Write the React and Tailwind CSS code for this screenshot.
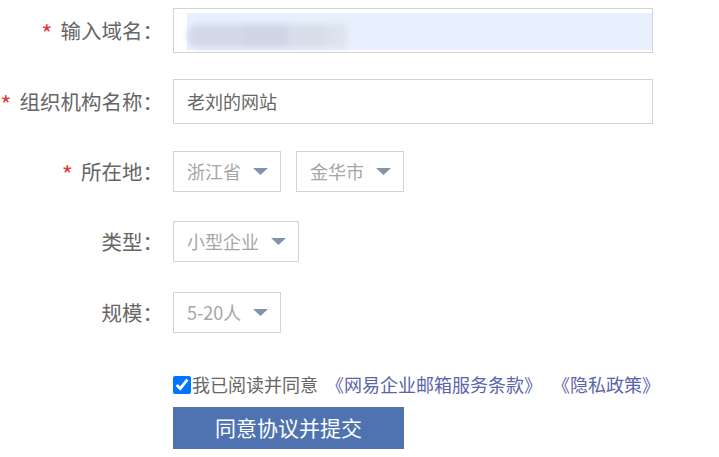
import React from 'react';

const FONT = "font-['Noto_Sans_CJK_SC','Noto_Sans',sans-serif]";

function Caret() {
  return (
    <svg width="15" height="7" viewBox="0 0 15 7" className="shrink-0">
      <path d="M0 0 H15 L7.5 7 Z" fill="#8392ab" />
    </svg>
  );
}

function Label({ required, children }) {
  return (
    <div className="w-[163px] shrink-0 text-right text-[20.5px] text-[#666] whitespace-nowrap">
      {required && (
        <span className="inline-block text-[#e4393c] text-[24px] leading-none mr-[8px] translate-y-[4px]">*</span>
      )}
      {children}：
    </div>
  );
}

function Select({ value, width }) {
  return (
    <div
      className={`${width} h-[41px] border border-[#d3d3d3] flex items-center justify-between pl-[13px] pr-[12px] text-[18px] text-[#a6a6a6]`}
    >
      <span>{value}</span>
      <Caret />
    </div>
  );
}

export default function App() {
  return (
    <div className={`${FONT} w-[719px] h-[457px] bg-white relative overflow-hidden`}>
      <div className="flex flex-col pt-[8px]">
        <div className="flex items-center">
          <Label required>输入域名</Label>
          <div className="ml-[10px] w-[480px] h-[45px] border border-[#d3d3d3] pl-[13px] pt-[4px] pb-[2px] overflow-hidden">
            <div className="h-full bg-[#e8f0fe] flex items-center">
              <div className="flex h-[24px] mt-[8px] blur-[3px]">
                <div className="w-[60px] bg-[#d3d8e6] rounded-l-full" />
                <div className="w-[40px] bg-[#cfd5e3]" />
                <div className="w-[40px] bg-[#d8dde9]" />
                <div className="w-[20px] bg-[#dde2ee]" />
              </div>
            </div>
          </div>
        </div>

        <div className="flex items-center mt-[26px]">
          <Label required>组织机构名称</Label>
          <div className="ml-[10px] w-[480px] h-[45px] border border-[#d3d3d3] px-[13px] flex items-center text-[18px] text-[#666]">
            老刘的网站
          </div>
        </div>

        <div className="flex items-center mt-[27px]">
          <Label required>所在地</Label>
          <div className="ml-[10px] flex gap-[15px]">
            <Select value="浙江省" width="w-[108px]" />
            <Select value="金华市" width="w-[108px]" />
          </div>
        </div>

        <div className="flex items-center mt-[29px]">
          <Label>类型</Label>
          <div className="ml-[10px]">
            <Select value="小型企业" width="w-[126px]" />
          </div>
        </div>

        <div className="flex items-center mt-[30px]">
          <Label>规模</Label>
          <div className="ml-[10px]">
            <Select value="5-20人" width="w-[108px]" />
          </div>
        </div>

        <div className="ml-[173px] mt-[38px] h-[27px] flex items-center text-[18px] text-[#666] whitespace-nowrap">
          <input type="checkbox" defaultChecked className="w-[18px] h-[18px] m-0 accent-[#0075ff]" />
          <span className="ml-[1px]">我已阅读并同意</span>
          <span className="ml-[8px] text-[#5c63a8]">《网易企业邮箱服务条款》</span>
          <span className="ml-[10px] text-[#5c63a8]">《隐私政策》</span>
        </div>

        <button className="ml-[173px] mt-[9px] w-[231px] h-[42px] bg-[#4e73b0] text-white text-[21px] flex items-center justify-center">
          同意协议并提交
        </button>
      </div>
    </div>
  );
}
